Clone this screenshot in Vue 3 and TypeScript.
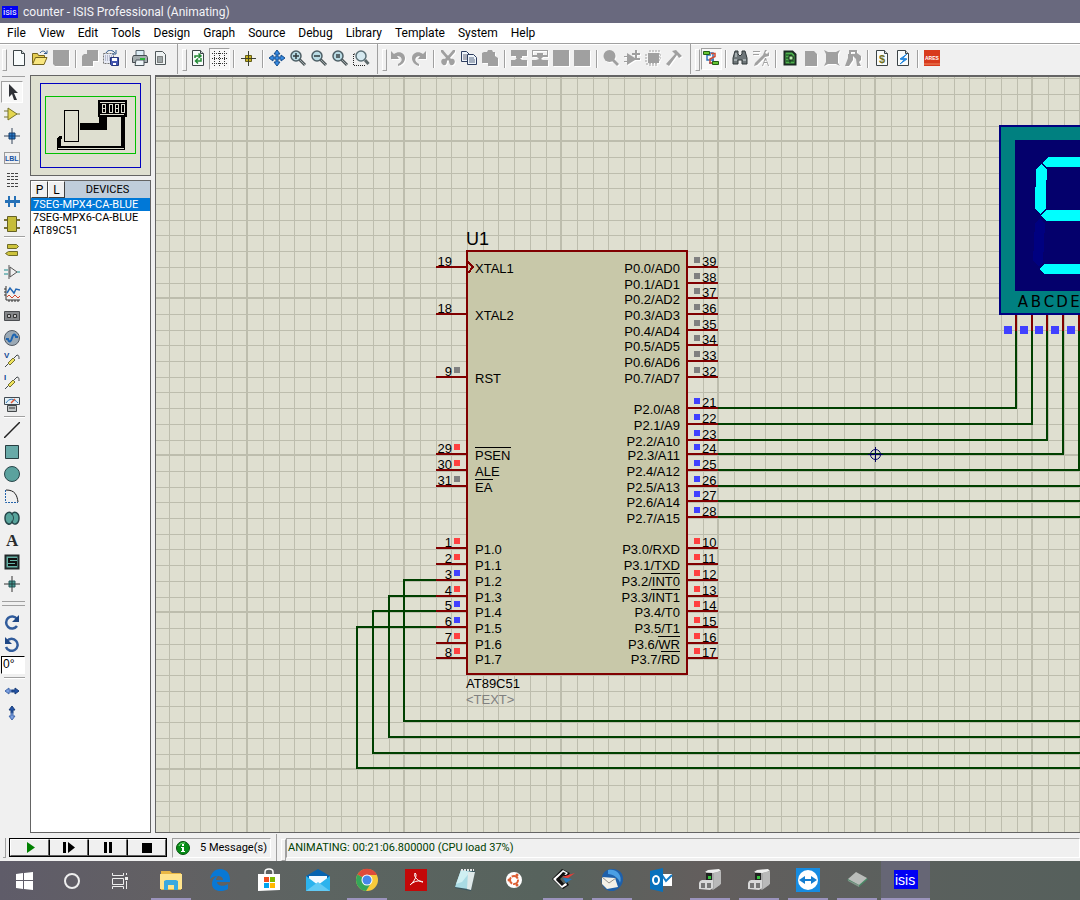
<script setup lang="ts">
import { ref } from 'vue'

interface Tool { name: string; off?: boolean; down?: boolean; art: string }
interface Pin { n: number; y: number; label: string; over?: string; mark?: string }

const menus = ['File', 'View', 'Edit', 'Tools', 'Design', 'Graph', 'Source', 'Debug', 'Library', 'Template', 'System', 'Help']

const page = '<path d="M2.500.5h8l3 3v12h-11z" fill="#f8fbfb" stroke="#3c4447"/><path d="M10.500.5v3h3" fill="#cdd6d6" stroke="#3c4447"/>'
const lens = (inner: string) =>
  `<path d="M9.500 9.500l5.500 5.500" stroke="#4e5759" stroke-width="3"/><path d="M10 10l5 5" stroke="#9aa5a8"/><circle cx="6" cy="6" r="5" fill="#b9dbe4" stroke="#4e5f66" stroke-width="1.500"/>${inner}`

const groups: Tool[][][] = [
  [
    [
      { name: 'New', art: page },
      { name: 'Open', art: '<path d="M.5 13.500v-10h5l1 2h6v2" fill="#e5cd52" stroke="#75641c"/><path d="M.5 14.500l3-7h11.500l-3 7z" fill="#f8e680" stroke="#75641c"/><path d="M8 3c2-3 5-2 6 0M15 .5v3h-3" fill="none" stroke="#315b8d"/>' },
      { name: 'Save', off: true, art: '<path d="M0 0h16v16H2l-2-2z"/>' },
    ],
    [
      { name: 'Import section', off: true, art: '<path d="M5 0h11v11h-5v5H0V6l2-2h3z"/>' },
      { name: 'Export section', art: '<path d="M.5 3.500h10v10H.5z" fill="#e6eaf5" stroke="#777" stroke-dasharray="2 1"/><path d="M2 6h7M2 8h5M2 10h5" stroke="#8a8fa8" stroke-dasharray="1 1"/><path d="M3 3C5-1 10 0 12 3M13 0v4H9" fill="none" stroke="#315b8d"/><path d="M7.500 7.500h8v8h-7l-1-1z" fill="#4355b0" stroke="#25357c"/><path d="M9 8h5v3H9zM10 13h3v2h-3z" fill="#fff"/>' },
    ],
    [
      { name: 'Print', art: '<path d="M4 6V.5h8V6" fill="#dcecf4" stroke="#56636a"/><path d="M1.500 5.500h13l1 2v5h-15v-5z" fill="#a5adaf" stroke="#444b50"/><path d="M4 10h8v5.500H3z" fill="#eef5f8" stroke="#4b555a"/><path d="M8 8h5v2H8z" fill="#28b338"/>' },
      { name: 'Mark output area', art: '<path d="M2.500 1.500h7l3 3v10h-10z" fill="#eef2f2" stroke="#50585a"/><path d="M4.500 6.500h5v6h-5z" fill="#9da5a6" stroke="#333" stroke-dasharray="1 1"/>' },
    ],
  ],
  [
    [
      { name: 'Redraw', art: page + '<path d="M5 8V6h5M8.500 3.500L11 6 8.500 8M11 8v3H6M8 8.500L5.500 11 8 13.500" fill="none" stroke="#238b35" stroke-width="1.500"/>' },
      { name: 'Grid', down: true, art: '<path d="M1 3.500h15M1 8.500h15M1 13.500h15M3.500 1v15M8.500 1v15M13.500 1v15" stroke="#333" stroke-dasharray="1 1"/>' },
    ],
    [{ name: 'Origin', art: '<path d="M8.500 1v15M1 8.500h15" stroke="#3f4437"/><path d="M5.500 5.500h6v6h-6z" fill="#c9b521" stroke="#66601e"/><path d="M8.500 5v7M5 8.500h7" stroke="#413f20"/>' }],
    [
      { name: 'Pan', art: '<path d="M8 0l3 4H9v3h3V5l4 3-4 3V9H9v3h2l-3 4-3-4h2V9H4v2L0 8l4-3v2h3V4H5z" fill="#378ae2" stroke="#164e8d"/>' },
      { name: 'Zoom in', art: lens('<path d="M3 6h6M6 3v6" stroke="#2f3a3d" stroke-width="1.500"/>') },
      { name: 'Zoom out', art: lens('<path d="M3 6h6" stroke="#2f3a3d" stroke-width="1.500"/>') },
      { name: 'Zoom all', art: lens('<path d="M4 4h4v4H4z" fill="#59686c"/>') },
      { name: 'Zoom area', art: '<path d="M.5 4v11.500H12M1 4h4" fill="none" stroke="#222" stroke-dasharray="1 1"/><path d="M12 10l3.500 4" stroke="#5d686a" stroke-width="3"/><circle cx="8" cy="6" r="5" fill="#d5e9f0" stroke="#5b7077" stroke-width="1.500"/>' },
    ],
  ],
  [
    [
      { name: 'Undo', off: true, art: '<path d="M1 1l3 3c5-4 11-1 11 4 0 4-3 7-7 8v-2c6-3 4-8-1-8l2 3H1z"/>' },
      { name: 'Redo', off: true, art: '<path d="M15 1l-3 3C7 0 1 3 1 8c0 4 3 7 7 8v-2c-6-3-4-8 1-8L7 9h8z"/>' },
    ],
    [
      { name: 'Cut', off: true, art: '<path d="M1 0h2l5 6-1 3-6-7zM15 0h-2L8 6l1 3 6-7z"/><path d="M8 5l3 4c3-1 5 2 3 5-3 3-5 0-5-3l-1-1-1 1c0 3-2 6-5 3-2-3 0-6 3-5z"/>' },
      { name: 'Copy', art: '<path d="M.5 1.500h5l3 3v7h-8z" fill="#eef4fa" stroke="#2e3e60"/><path d="M2 5h4M2 7h4M2 9h4" stroke="#667"/><path d="M6.500 4.500h6l3 3v7h-9z" fill="#eef4fa" stroke="#2e3e60"/><path d="M8 8h5M8 10h6M8 12h6" stroke="#5a6b84"/>' },
      { name: 'Paste', off: true, art: '<path d="M2 2h3l1-2h4l1 2h2v4l3 2v8H6v-3H0V3z"/>' },
    ],
    [
      { name: 'Block copy', off: true, art: '<path d="M0 0h16v6h-5v2H9l2 2h5v6H0v-6h4l2-2H5V6H0z"/>' },
      { name: 'Block move', off: true, art: '<path d="M0 0h16v7h-5L9 9l2 1h5v6H0v-6h4l3-1-2-2H0zM1 1v4h4V3h6v2h4V1z" fill-rule="evenodd"/>' },
      { name: 'Block rotate', off: true, art: '<path d="M0 0h16v16H0z"/>' },
      { name: 'Block delete', off: true, art: '<path d="M0 0h16v16H0z"/>' },
    ],
    [
      { name: 'Pick parts', off: true, art: '<circle cx="6.500" cy="6" r="6"/><path d="M10 8l6 6-2 2-6-6z"/>' },
      { name: 'Make device', off: true, art: '<path d="M0 6h3V3l8 5h5v2h-5l-8 5v-3H0v-1h3V7H0zM11 0h2v3h3v2h-3v3h-2V5H8V3h3z"/>' },
      { name: 'Packaging tool', off: true, art: '<path d="M3 3h11v10H3z"/><path d="M5 0v16M8 0v16M11 0v16M14 0v11M0 5h16M0 8h16M0 11h14M1 14h12" stroke="#a0a0a0" stroke-dasharray="2 1"/>' },
      { name: 'Decompose', off: true, art: '<path d="M6 1l4-1 6 6-3 2-2-3-8 11-3-2L9 4z"/>' },
    ],
  ],
  [
    [{ name: 'Wire autorouter', down: true, art: '<path d="M5 3h5v10H6M8 5H4v5h7" fill="none" stroke="#3276ba" stroke-width="1.500"/><path d="M8 3.500h4v3L7 9v4h4" fill="none" stroke="#d04b34" stroke-width="1.500"/><path d="M.5 1.500h6v3h-6zM9.500 11.500h6v3h-6z" fill="#66c634" stroke="#235e15"/>' }],
    [
      { name: 'Search and tag', art: '<path d="M3 1h3v3l2 2 2-2V1h3l2 7v6h-5v-4H6v4H1V8z" fill="#6e7679" stroke="#31383b"/><path d="M2 10h3M11 10h3M4 3v4" stroke="#d8e0e2"/>' },
      { name: 'Property assignment', off: true, art: '<path d="M0 1h7v1H0zM0 4h6v1H0zM12 0h2l-2 3 2 1 2-2v4l-4 1-8 8-3 1 1-3 8-8zM9 16l3-8h1l3 8h-1l-1-3h-3l-1 3zm2-4h3l-1-2z"/>' },
    ],
    [
      { name: 'Design explorer', art: '<path d="M2.500 1.500h8l3 3v10h-11z" fill="#4fb14d" stroke="#1b2a23" stroke-width="2"/><path d="M4 5h6M4 8h3M9 8h3M4 11h8M8 5v8" stroke="#0f361b"/><path d="M7 6h4v4H7z" fill="#bdf1b0" stroke="#162b1c"/>' },
      { name: 'New sheet', off: true, art: '<path d="M2 1h9l3 3v12H2z"/>' },
      { name: 'Remove sheet', off: true, art: '<path d="M0 0l4 2h8l4-2-2 4v9l2 3-4-2H4l-4 2 2-4V4z"/>' },
      { name: 'Exit to parent', off: true, art: '<path d="M4 0h8v3l4 3v4l-2 2 2 4h-4l-1-7-3-3v4l-4 6H0l3-8V4h1zM6 2v2h4V2z" fill-rule="evenodd"/>' },
    ],
    [
      { name: 'Bill of materials', art: page + '<text x="5" y="13" font-size="11" fill="#70701e" font-weight="bold">$</text>' },
      { name: 'Electrical rules check', art: page + '<path d="M12 4L5 9l4 1-4 4 7-5-4-1z" fill="#2689df" stroke="#2689df"/>' },
    ],
    [{ name: 'Netlist to ARES', art: '<path d="M0 0h16v16H0z" fill="#d83b1d"/><text x="1" y="10" font-size="5" font-weight="bold" fill="#fff">ARES</text><path d="M0 14h16" stroke="#f08b62"/>' }],
  ],
]

const sideTools: Tool[][] = [
  [
    { name: 'Selection', down: true, art: '<path d="M5 0v13l3-3 2 6h3l-3-7h4z" fill="#2f3136"/>' },
    { name: 'Component', art: '<path d="M0 5h5M0 11h5M12 8h4" stroke="#747430"/><path d="M4 2l9 6-9 6z" fill="#e4d64e" stroke="#77732a"/>' },
    { name: 'Junction dot', art: '<path d="M8 0v16M0 8h16" stroke="#34455b"/><path d="M5 5h6v6H5z" fill="#2b7cc8" stroke="#193c69"/><path d="M8 5v6M5 8h6" stroke="#123e76"/>' },
    { name: 'Wire label', art: '<path d="M.5 2.500h15v11H.5z" fill="none" stroke="#444" stroke-dasharray="1 1"/><text x="1" y="11" font-size="7" font-weight="bold" fill="#1752a2">LBL</text>' },
    { name: 'Text script', art: '<path d="M3 1.500h11M3 4.500h11M3 7.500h11M3 11.500h11M3 14.500h11" stroke="#444" stroke-dasharray="3 1"/>' },
    { name: 'Bus', art: '<path d="M1 7.500h15" stroke="#2671b7" stroke-width="3"/><path d="M5 2v11M11 2v11" stroke="#2671b7" stroke-width="2"/>' },
    { name: 'Subcircuit', art: '<path d="M0 4h4M0 12h4M12 4h4M12 12h4" stroke="#777137" stroke-width="2"/><path d="M3.500.5h9v15h-9z" fill="#c6bd39" stroke="#656126"/>' },
  ],
  [
    { name: 'Terminals', art: '<path d="M3.500 2.500h9l2 2-2 2h-9zM13.500 9.500h-9l-3 2 3 2h9z" fill="#cdc33c" stroke="#6e6b29"/>' },
    { name: 'Device pins', art: '<path d="M0 6h4M0 10h4M13 8h3" stroke="#198a8c"/><path d="M6 3v10l7-5zM5 1v14" fill="none" stroke="#555"/>' },
    { name: 'Graph', art: '<path d="M2 0v14h14M0 3h2M0 6h2M0 9h2M5 14v2M8 14v2M11 14v2M14 14v2" fill="none" stroke="#333"/><path d="M3 7l3-5 4 5 2-4 4 1" fill="none" stroke="#2367b3" stroke-width="1.500"/><path d="M3 11l2-2 3 3 3-3 3 3 2-2" fill="none" stroke="#d24830"/>' },
    { name: 'Tape recorder', art: '<path d="M.5 3.500h15v9H.5z" fill="#85878a" stroke="#4b4d50"/><path d="M3.500 9.500v-3h3v3zM9.500 9.500v-3h3v3z" fill="#ccc" stroke="#333"/>' },
    { name: 'Generator', art: '<circle cx="8" cy="8" r="7.500" fill="#9ba9b5" stroke="#525963"/><path d="M2 9h2c1 4 3 3 4-1s3-5 4-1h2" fill="none" stroke="#1e65b1" stroke-width="2"/>' },
    { name: 'Voltage probe', art: '<text x="0" y="6" font-size="8" font-weight="bold" fill="#134994">V</text><path d="M1 15l3-3 5-5 4-4c2 0 2 2 2 4" fill="none" stroke="#454a4d"/><path d="M4 11l5-5 2 2-5 5z" fill="#efe35d" stroke="#74702f"/>' },
    { name: 'Current probe', art: '<text x="0" y="6" font-size="8" font-weight="bold" fill="#134994">I</text><path d="M1 15l3-3 5-5 4-4c2 0 2 2 2 4" fill="none" stroke="#454a4d"/><path d="M4 11l5-5 2 2-5 5z" fill="#efe35d" stroke="#74702f"/>' },
    { name: 'Instruments', art: '<path d="M.5 1.500h15v7H.5z" fill="#e5f0f5" stroke="#424b52"/><path d="M2 7c3-5 8-5 12 0" fill="none" stroke="#2e78bb"/><path d="M7 7l4-4" stroke="#dd5230" stroke-width="1.500"/><path d="M3.500 9.500h9v6h-9z" fill="#bfc4c5" stroke="#44484a"/><path d="M5 12h6" stroke="#333"/>' },
  ],
  [
    { name: 'Line', art: '<path d="M0 16L16 0" stroke="#222" stroke-width="1.500"/>' },
    { name: 'Box', art: '<path d="M1.500 1.500h13v13h-13z" fill="#68aaa8" stroke="#283e41"/>' },
    { name: 'Circle', art: '<circle cx="8" cy="8" r="7.500" fill="#5ba29e" stroke="#29464a"/>' },
    { name: 'Arc', art: '<path d="M1.500 2v12.500H14" fill="none" stroke="#2363ab" stroke-dasharray="2 1"/><path d="M2 2c9 0 11 5 12 12" fill="none" stroke="#222"/>' },
    { name: 'Path', art: '<path d="M8 4c-2-3-7-2-7 4s5 8 7 4c2 4 7 2 7-4s-5-7-7-4z" fill="#58a49c" stroke="#26474a" stroke-width="1.500"/><path d="M8 4c2 3 2 5 0 8" fill="none" stroke="#26474a"/>' },
    { name: 'Text', art: '<text x="2" y="14" font-family="Liberation Serif, serif" font-size="17" font-weight="bold" fill="#292c2e">A</text>' },
    { name: 'Symbol', art: '<path d="M1.500 1.500h13v13h-13z" fill="#65b1a5" stroke="#202728" stroke-width="2"/><path d="M13 5H5v3h7v3H4" fill="none" stroke="#111" stroke-width="2"/>' },
    { name: 'Marker', art: '<path d="M8 0v16M0 8h16" stroke="#333"/><path d="M5 5h6v6H5z" fill="#479a92" stroke="#29595b"/><path d="M8 5v6M5 8h6" stroke="#253c3c"/>' },
  ],
]
const rotateTools: Tool[] = [
  { name: 'Rotate clockwise', art: '<path d="M13 5a6 6 0 1 0 0 7" fill="none" stroke="#315c9c" stroke-width="2.500"/><path d="M15 1v7H8z" fill="#1e4785"/>' },
  { name: 'Rotate anti-clockwise', art: '<path d="M3 5a6 6 0 1 1-1 6" fill="none" stroke="#315c9c" stroke-width="2.500"/><path d="M1 1v7h7z" fill="#1e4785"/>' },
]
const mirrorTools: Tool[] = [
  { name: 'X-mirror', art: '<path d="M1 8l4-3v2h3v2H5v2z" fill="#7b9fe0" stroke="#4268ab"/><path d="M15 8l-4-3v2H8v2h3v2z" fill="#2454a8" stroke="#173c78"/>' },
  { name: 'Y-mirror', art: '<path d="M8 1L5 5h2v3h2V5h2z" fill="#2454a8" stroke="#173c78"/><path d="M8 15l-3-4h2V8h2v3h2z" fill="#7b9fe0" stroke="#4268ab"/>' },
]

const devices = ['7SEG-MPX4-CA-BLUE', '7SEG-MPX6-CA-BLUE', 'AT89C51']
const picked = ref(devices[0])
const angle = ref('0°')

const grey = '#808080', red = '#ff4040', blue = '#4040ff'
const leftPins: Pin[] = [
  { n: 19, y: 267, label: 'XTAL1' }, { n: 18, y: 314, label: 'XTAL2' }, { n: 9, y: 377, label: 'RST', mark: grey },
  { n: 29, y: 454, label: '', over: 'PSEN', mark: red }, { n: 30, y: 470, label: 'ALE', mark: red }, { n: 31, y: 486, label: '', over: 'EA', mark: grey },
  ...[548, 564, 580, 596, 611, 627, 643, 658].map((y, i) => ({ n: i + 1, y, label: `P1.${i}`, mark: [2, 4, 5].includes(i) ? blue : red })),
]
const p3: [string, string][] = [['RXD', ''], ['TXD', ''], ['', 'INT0'], ['', 'INT1'], ['T0', ''], ['T1', ''], ['', 'WR'], ['', 'RD']]
const rightPins: Pin[] = [
  ...[267, 283, 298, 314, 330, 345, 361, 377].map((y, i) => ({ n: 39 - i, y, label: `P0.${i}/AD${i}`, mark: grey })),
  ...[408, 424, 440, 454, 470, 486, 501, 517].map((y, i) => ({ n: 21 + i, y, label: `P2.${i}/A${8 + i}`, mark: blue })),
  ...[548, 564, 580, 596, 611, 627, 643, 658].map((y, i) => ({ n: 10 + i, y, label: `P3.${i}/${p3[i][0]}`, over: p3[i][1], mark: red })),
]
const overWidth: Record<string, number> = { PSEN: 36, EA: 18, INT0: 29, INT1: 29, WR: 22, RD: 19 }
const wires = [
  'M718 408H1016V330', 'M718 424H1032V330', 'M718 440H1047V330', 'M718 454H1063V330', 'M718 470H1079V330',
  'M718 486H4000', 'M718 501H4000', 'M718 517H4000',
  'M437 580H404V721H4000', 'M437 596H389V737H4000', 'M437 611H373V753H4000', 'M437 627H357V768H4000',
]
const segPins = [1016, 1032, 1047, 1063, 1079]
const segMarks = [1004, 1020, 1035, 1051, 1067]
const segLetters = ['A', 'B', 'C', 'D', 'E'].map((t, i) => ({ t, x: 1023 + i * 13 }))
const gridSteps = [17, 33, 48, 64, 80, 95, 111, 127, 143]

const simButtons = [
  { name: 'Play', art: '<path d="M5 2l8 5.500L5 13z" fill="#008000"/>' },
  { name: 'Step', art: '<path d="M2 2h3v11H2zM7 2l7 5.500L7 13z"/>' },
  { name: 'Pause', art: '<path d="M4 2h3v11H4zM9 2h3v11H9z"/>' },
  { name: 'Stop', art: '<path d="M3 3h10v10H3z"/>' },
]

const box = '<path d="M8 4l11-2 3 2v13l-7 5-7-4z" fill="#a8a8a8"/><path d="M7 4l3-2 11-1 2 2-8 2z" fill="#eee"/><path d="M8 5h6v9H8z" fill="#222"/><path d="M10 8h3v3h-3z" fill="#34c13d"/><path d="M16 5l7-2v13l-7 5z" fill="#b9b9b9"/><path d="M2 13l2-1h11v8l-3 2-11-1v-6z" fill="#d8d8d8"/><path d="M3 15h4v5H3zM9 15h4v5H9z" fill="#777"/>'
const tasks: { name: string; open?: boolean; active?: boolean; art: string }[] = [
  { name: 'File Explorer', open: true, art: '<path d="M2 3h9l2 2h9v17H2z" fill="#e9b744"/><path d="M1 6h22v15H1z" fill="#ffe48d"/><path d="M5 22v-9l2-1h10l2 1v9h-4v-5H9v5z" fill="#3aa9df"/>' },
  { name: 'Edge', art: '<path d="M2 11C3 5 7 1 12 1c7 0 10 5 10 11v2H9c0 4 7 5 11 2v5c-7 4-16 2-16-5 0-4 2-7 6-8-1 1-2 2-2 4h7c0-5-9-5-13-1z" fill="#0878d5"/>' },
  { name: 'Store', art: '<path d="M8 7V4c0-4 8-4 8 0v3" fill="none" stroke="#fff" stroke-width="1.500"/><path d="M1 6h22v16l-22 1z" fill="#fff"/><path d="M7 9h5v5H7z" fill="#f04e20"/><path d="M13 9h5v5h-5z" fill="#7fba00"/><path d="M7 15h5v5H7z" fill="#00a4ef"/><path d="M13 15h5v5h-5z" fill="#ffb900"/>' },
  { name: 'Mail', art: '<path d="M0 8l12-7 12 7v14H0z" fill="#0763af"/><path d="M3 8h18v9H3z" fill="#f4faff"/><path d="M0 8l12 9 12-9v15H0z" fill="#2cb3ed"/><path d="M0 23l12-9 12 9z" fill="#61caf4"/>' },
  { name: 'Chrome', open: true, art: '<circle cx="12" cy="12" r="11" fill="#f7ca3b"/><path d="M12 12L2.500 6.500A11 11 0 0 1 22 7H12z" fill="#df4b3b"/><path d="M12 12L2.500 6.500A11 11 0 0 0 11 23l5-8z" fill="#35a65a"/><circle cx="12" cy="12" r="5.500" fill="#fff"/><circle cx="12" cy="12" r="4.500" fill="#4688eb"/>' },
  { name: 'Acrobat', art: '<path d="M1 1h22v22H1z" fill="#c40808"/><path d="M11 5c3 2-1 9-5 12M11 5c-2 4 4 9 8 9M7 16c4-3 8-4 12-2" fill="none" stroke="#fff"/>' },
  { name: 'Notepad', art: '<path d="M8 1l14 2-4 20-16-3z" fill="#3b565f"/><path d="M8 2l12 2-5 17-13-2z" fill="#a9dbe4"/><path d="M8 2l9 2-8 10-6 2z" fill="#cfeff2"/><path d="M15 4h7l-4 18-4-1z" fill="#dfe9e9"/><path d="M8 2h13" stroke="#e6e6e6" stroke-width="2" stroke-dasharray="2 1"/>' },
  { name: 'Ubuntu', art: '<circle cx="12" cy="12" r="8" fill="#fff"/><circle cx="12" cy="12" r="4" fill="none" stroke="#dd6035" stroke-width="2" stroke-dasharray="7 1"/><g fill="#dd6035"><circle cx="7" cy="12" r="1.500"/><circle cx="15" cy="7" r="1.500"/><circle cx="15" cy="17" r="1.500"/></g>' },
  { name: 'Cadence', open: true, art: '<path d="M1 11L11 1l8 4-3 4-5-2-4 4 5 5 4-2 2 3-6 4z" fill="#101010"/><path d="M2 11l10-9 5 3-2 2-4-1-6 5 6 6 4-2 1 2-5 3z" fill="#fff"/><path d="M5 12l7-8 3 1-6 6 4 5-2 2z" fill="#101010"/><path d="M11 9l13-4-7 5z" fill="#ef3b35"/><path d="M12 10l9 1-6 4z" fill="#277abc"/>' },
  { name: 'Thunderbird', open: true, art: '<path d="M2 9C4-1 18-1 22 6c4 9-4 18-12 17C4 22 0 15 2 9z" fill="#1f60a9"/><path d="M8 2c8-2 15 5 12 13-1-5-7-9-12-9z" fill="#4b9fe4"/><path d="M2 9l13 1 3 9-11 2-5-5z" fill="#f4f1e8"/><path d="M2 9l7 6 7-5" fill="none" stroke="#93918c"/>' },
  { name: 'Outlook', art: '<path d="M12 6h11v12H12z" fill="#fff"/><path d="M13 7l4 6 6-6" fill="none" stroke="#137cc8" stroke-width="2"/><path d="M1 3l13-3v24L1 21z" fill="#0871bd"/><ellipse cx="7" cy="12" rx="3" ry="4" fill="none" stroke="#fff" stroke-width="2"/>' },
  { name: 'Simulator', open: true, art: box },
  { name: 'Simulator 2', open: true, art: box },
  { name: 'TeamViewer', open: true, art: '<path d="M0 0h24v24H0z" fill="#168ce2"/><circle cx="12" cy="12" r="10" fill="#fff"/><path d="M3 12l6-4v3h6V8l6 4-6 4v-3H9v3z" fill="#137dd0"/>' },
  { name: 'Chip tool', open: true, art: '<path d="M2 12l9-7 12 6-9 8z" fill="#4a8866"/><path d="M3 11l8-7 11 6-8 7z" fill="#babdba"/><path d="M3 12l11 5v2l-11-6z" fill="#83958a"/>' },
  { name: 'ISIS', active: true, art: '<path d="M0 2h24v19H0z" fill="#0000f4"/><text x="1" y="17" font-size="14" fill="#fff">isis</text>' },
]
</script>

<template>
  <div class="app">
    <header class="title">
      <svg class="logo" viewBox="0 0 16 12" aria-hidden="true"><rect width="16" height="12" fill="#0000f4" /><text x="1" y="9" font-size="9" fill="#fff">isis</text></svg>
      <span>counter - ISIS Professional (Animating)</span>
    </header>
    <nav class="menu"><button v-for="m in menus" :key="m" type="button">{{ m }}</button></nav>

    <div class="toolbar">
      <div v-for="(group, gi) in groups" :key="gi" class="group">
        <i class="grip" />
        <template v-for="(part, pi) in group" :key="pi">
          <i v-if="pi" class="sep" />
          <button v-for="t in part" :key="t.name" type="button" class="tool" :class="{ off: t.off, down: t.down }" :aria-label="t.name" :disabled="t.off">
            <svg viewBox="0 0 17 17" v-html="t.art" />
          </button>
        </template>
      </div>
    </div>

    <main class="work">
      <aside class="side">
        <template v-for="(part, pi) in sideTools" :key="pi">
          <i v-if="pi" class="hsep" />
          <button v-for="t in part" :key="t.name" type="button" class="stool" :class="{ down: t.down }" :aria-label="t.name">
            <svg viewBox="0 0 16 16" v-html="t.art" />
          </button>
        </template>
        <i class="hgrip" />
        <button v-for="t in rotateTools" :key="t.name" type="button" class="stool" :aria-label="t.name"><svg viewBox="0 0 16 16" v-html="t.art" /></button>
        <input v-model="angle" class="angle" type="text" aria-label="Rotation angle">
        <i class="hsep" />
        <button v-for="t in mirrorTools" :key="t.name" type="button" class="stool" :aria-label="t.name"><svg viewBox="0 0 16 16" v-html="t.art" /></button>
      </aside>

      <section class="panels">
        <div class="overview">
          <svg viewBox="0 0 119 99" role="img" aria-label="Sheet overview" shape-rendering="crispEdges">
            <g fill="none">
              <rect x="9.500" y="7.500" width="100" height="84" stroke="#0000c0" />
              <rect x="14.500" y="20.500" width="90" height="57" stroke="#00c000" />
              <rect x="33.500" y="34.500" width="14" height="31" stroke="#000" />
            </g>
            <path d="M67 24h29v17H67zM68 41h8v13H49v-7h19zM90 41h4v33H26V62l2-2h3v3h-1v7h60z" />
            <g fill="none" stroke="#dedfd0">
              <path d="M69 26h25M71 28v8h3v-8zM78 28v8h3v-8zM84 28v8h3v-8zM90 28v8h3v-8zM71 32h3M84 32h3M69 38h24M27 72h66" />
            </g>
          </svg>
        </div>
        <div class="devices">
          <div class="devhead">
            <button type="button">P</button><button type="button">L</button><h2>DEVICES</h2>
          </div>
          <ul>
            <li v-for="d in devices" :key="d"><button type="button" :class="{ picked: d === picked }" @click="picked = d">{{ d }}</button></li>
          </ul>
        </div>
      </section>

      <section class="sheet">
        <svg width="100%" height="100%" role="img" aria-label="Schematic" font-size="13" shape-rendering="crispEdges">
          <defs>
            <pattern id="grid" x="246" y="140" width="157" height="157" patternUnits="userSpaceOnUse">
              <rect width="157" height="157" fill="#dfdfd0" />
              <g fill="#bdbdad">
                <rect width="2" height="157" /><rect width="157" height="2" />
                <template v-for="s in gridSteps" :key="s">
                  <rect :x="s" width="1" height="157" /><rect :y="s" width="157" height="1" />
                </template>
              </g>
            </pattern>
          </defs>
          <g transform="translate(-156 -77)">
            <rect width="4000" height="3000" fill="url(#grid)" />
            <g fill="none" stroke="#004000" stroke-width="2"><path v-for="w in wires" :key="w" :d="w" /></g>

            <rect x="467" y="251" width="220" height="423" fill="#c8c8a9" stroke="#800000" stroke-width="2" />
            <path d="M468 262l5 5-5 6" fill="none" stroke="#800000" stroke-width="2" />
            <text x="466" y="245" font-size="18">U1</text>
            <text x="466" y="688">AT89C51</text>
            <text x="466" y="704" fill="#808080">&lt;TEXT&gt;</text>

            <g v-for="p in leftPins" :key="p.n">
              <rect x="436" :y="p.y - 1" width="30" height="2" fill="#800000" />
              <rect v-if="p.mark" x="454" :y="p.y - 10" width="6" height="6" :fill="p.mark" />
              <text x="452" :y="p.y - 1" text-anchor="end">{{ p.n }}</text>
              <text x="475" :y="p.y + 6">{{ p.label }}{{ p.over }}</text>
              <rect v-if="p.over" x="475" :y="p.y - 7" :width="overWidth[p.over]" height="1" />
            </g>
            <g v-for="p in rightPins" :key="p.n">
              <rect x="688" :y="p.y - 1" width="30" height="2" fill="#800000" />
              <rect x="694" :y="p.y - 10" width="6" height="6" :fill="p.mark" />
              <text x="702" :y="p.y - 1">{{ p.n }}</text>
              <text x="680" :y="p.y + 6" text-anchor="end">{{ p.label }}{{ p.over }}</text>
              <rect v-if="p.over" :x="680 - overWidth[p.over]" :y="p.y - 7" :width="overWidth[p.over]" height="1" />
            </g>

            <g fill="none" stroke="#000060">
              <circle cx="875.500" cy="454.500" r="5" shape-rendering="auto" />
              <path d="M875.500 447v15M868 454.500h15" />
            </g>

            <rect x="1000" y="126" width="640" height="188" fill="#008080" stroke="#000080" stroke-width="2" />
            <rect x="1015" y="140" width="610" height="151" fill="#04006c" />
            <g fill="#00ffff">
              <path d="M1042 163l6-6h40l6 6-5 4h-42z" />
              <path d="M1041 164l6 5v10l-1 2v28l-6 5-5-5v-21l1-2v-17z" />
              <path d="M1041 215l5-5h40l5 5-5 6h-40z" />
              <path d="M1039 269l5-5h42l5 5-5 5h-42z" />
            </g>
            <path d="M1040 218l5 6-2 38-4 4-6-5 2-38z" fill="#000080" />
            <g font-family="DejaVu Sans, sans-serif" font-size="15" text-anchor="middle">
              <text v-for="l in segLetters" :key="l.t" :x="l.x" y="307">{{ l.t }}</text>
            </g>
            <rect v-for="x in segPins" :key="x" :x="x - 1" y="315" width="2" height="16" fill="#800000" />
            <rect v-for="x in segMarks" :key="x" :x="x" y="326" width="8" height="8" fill="#4040ff" />
          </g>
        </svg>
      </section>
    </main>

    <footer class="status">
      <i class="sgrip" />
      <div class="sim">
        <button v-for="b in simButtons" :key="b.name" type="button" :aria-label="b.name"><svg viewBox="0 0 16 15" v-html="b.art" /></button>
      </div>
      <div class="msgs">
        <svg viewBox="0 0 14 14" aria-hidden="true"><circle cx="7" cy="7" r="6.500" fill="#078c17" stroke="#05510d" /><path d="M3 5c1-3 4-3 6-3" stroke="#8be88b" fill="none" /><path d="M6 3h2v2H6zM5 6h3v4h1v1H5v-1h1V7H5z" fill="#fff" /></svg>
        <span>5 Message(s)</span>
      </div>
      <i class="grip" />
      <output class="anim">ANIMATING: 00:21:06.800000 (CPU load 37%)</output>
    </footer>

    <nav class="taskbar" aria-label="Taskbar">
      <div class="system">
        <button type="button" aria-label="Start"><svg viewBox="0 0 24 24" fill="#fff"><path d="M4 5l7-1v7H4zM12 4l9-1v8h-9zM4 12h7v8l-7-1zM12 12h9v9l-9-1z" /></svg></button>
        <button type="button" aria-label="Cortana"><svg viewBox="0 0 24 24" fill="none" stroke="#eee" stroke-width="2"><circle cx="12" cy="12" r="7" /></svg></button>
        <button type="button" aria-label="Task view"><svg viewBox="0 0 24 24" fill="none" stroke="#eee"><path d="M4.500 4v2.500h11V4M4.500 9.500h11v6h-11zM4.500 20v-2.500h11V20M18.500 4v2M18.500 12v8" /><path d="M17 8h3v3h-3z" fill="#eee" stroke="none" /></svg></button>
      </div>
      <button v-for="t in tasks" :key="t.name" type="button" class="task" :class="{ open: t.open, active: t.active }" :aria-label="t.name">
        <svg viewBox="0 0 24 24" v-html="t.art" />
      </button>
    </nav>
  </div>
</template>

<style>
body { background: #f0f0f0; }
</style>

<style scoped>
* { box-sizing: border-box; }
.app { display: flex; flex-direction: column; min-height: 100vh; overflow: hidden; background: #f0f0f0; color: #000; font-family: "Liberation Sans", Arial, sans-serif; font-size: 11px; }
button { margin: 0; padding: 0; border: 0; background: none; color: inherit; font: inherit; }
svg { display: block; }

.title { display: flex; align-items: center; gap: 5px; height: 23px; padding-left: 2px; background: #69697e; color: #f4f4f8; font: 12px Roboto, sans-serif; }
.logo { width: 16px; height: 12px; }
.menu { display: flex; gap: 13px; height: 21px; padding-left: 7px; background: #fff; border-bottom: 1px solid #a0a0a0; font: 12px Roboto, sans-serif; }

.toolbar { display: flex; height: 31px; align-items: center; border-top: 1px solid #fff; padding-bottom: 3px; }
.group { display: flex; align-items: center; }
.grip { position: relative; flex: none; width: 16px; height: 30px; border-left: 1px solid #a0a0a0; margin-left: 5px; margin-right: -5px; }
.grip::after { content: ""; position: absolute; left: 4px; top: 5px; width: 3px; height: 20px; border: 1px solid #a0a0a0; border-left-color: #fff; border-top-color: #fff; }
.group:first-child .grip { width: 9px; margin: 0; border-left: 0; }
.group:first-child .grip::after { left: 2px; }
.sep { width: 8px; height: 18px; flex: none; background: linear-gradient(90deg, transparent 3px, #a0a0a0 3px, #a0a0a0 4px, #fff 4px, #fff 5px, transparent 5px); }
.tool { display: grid; place-items: center; flex: none; width: 21px; height: 22px; }
.tool svg { width: 17px; height: 17px; }
.tool.off svg { fill: #a0a0a0; filter: drop-shadow(1px 1px 0 #fff); }
.down { background: #f8f8f8; border: 1px solid; border-color: #a0a0a0 #fff #fff #a0a0a0; }

.work { display: flex; flex: 1; min-height: 0; }
.side { display: flex; flex-direction: column; flex: none; width: 30px; padding-top: 6px; }
.side::before { content: ""; height: 1px; margin: -5px 5px 4px 2px; background: #a0a0a0; }
.stool { display: grid; place-items: center; flex: none; width: 22px; height: 22px; margin-left: 1px; }
.stool svg { width: 16px; height: 16px; }
.hsep { flex: none; height: 4px; margin: 0 5px 0 4px; background: linear-gradient(transparent 1px, #a0a0a0 1px, #a0a0a0 2px, #fff 2px, #fff 3px, transparent 3px); }
.hgrip { flex: none; height: 5px; margin: 6px 5px 5px 2px; border-top: 1px solid #a0a0a0; border-bottom: 1px solid #a0a0a0; }
.angle { flex: none; width: 24px; height: 18px; margin: 1px 0 2px 1px; padding: 0 0 3px 1px; border: 1px solid #fff; border-top-color: #000; border-left-color: #000; background: #fff; font: 12px "Liberation Sans", sans-serif; }

.panels { display: flex; flex-direction: column; flex: none; width: 125px; gap: 4px; padding-right: 4px; }
.overview { border: 1px solid #646464; background: #dedfd0; }
.devices { flex: 1; border: 1px solid #646464; background: #fff; }
.devhead { display: flex; height: 17px; background: #bfcddb; }
.devhead button { width: 17px; border: 1px solid; border-color: #fff #404040 #404040 #fff; background: #f0f0f0; font: 12px/14px Roboto, sans-serif; }
.devhead h2 { flex: 1; margin: 0; text-align: center; font: 400 11px/17px Roboto, sans-serif; }
.devices ul { margin: 0; padding: 0; list-style: none; font-family: Roboto, sans-serif; font-size: 11px; }
.devices li button { display: block; width: 100%; height: 13px; padding-left: 2px; text-align: left; line-height: 14px; white-space: nowrap; }
.picked { background: #0078d7; color: #fff; }

.sheet { flex: 1; min-width: 0; min-height: 755px; border: 1px solid #646464; border-right: 0; border-top-width: 2px; display: grid; background: #dfdfd0; }
.sheet svg { overflow: hidden; }

.status { display: flex; align-items: center; height: 28px; padding-top: 1px; font-family: Roboto, sans-serif; }
.sgrip { flex: none; width: 3px; height: 20px; margin: 0 3px 0 3px; border-right: 1px solid #a0a0a0; border-bottom: 1px solid #a0a0a0; }
.sim { display: flex; flex: none; border: 1px solid #000; }
.sim button { display: grid; place-items: center; width: 39px; height: 17px; border: 1px solid; border-color: #fff #606060 #606060 #fff; background: #f0f0f0; }
.sim button + button { border-left-color: #000; }
.sim svg { width: 16px; height: 15px; }
.msgs { display: flex; align-items: center; flex: none; gap: 10px; width: 99px; height: 20px; margin-left: 5px; padding-left: 3px; border: 1px solid; border-color: #a0a0a0 #fff #fff #a0a0a0; white-space: nowrap; }
.msgs svg { width: 14px; height: 14px; }
.status .grip { height: 27px; width: 15px; }
.anim { flex: 1; height: 20px; padding-left: 1px; border: 1px solid; border-color: #a0a0a0 #fff #fff #a0a0a0; color: #004000; line-height: 18px; white-space: nowrap; }

.taskbar { display: flex; height: 39px; background: linear-gradient(90deg, #5f5c69, #626063 15%, #5c6461 30%, #57635d 50%, #635e5d 65%, #5a605d 85%, #56605c); }
.system { display: flex; flex: none; margin-right: 2px; }
.system button { display: grid; place-items: center; width: 48px; }
.task { display: grid; place-items: center; flex: none; width: 49px; border-bottom: 2px solid transparent; }
.task.open { background: linear-gradient(#9b93bd, #9b93bd) 50% 100% / 40px 2px no-repeat border-box; }
.task.active { background: #666675; border-bottom-color: #9b93bd; }
.taskbar svg { width: 24px; height: 24px; }
</style>
